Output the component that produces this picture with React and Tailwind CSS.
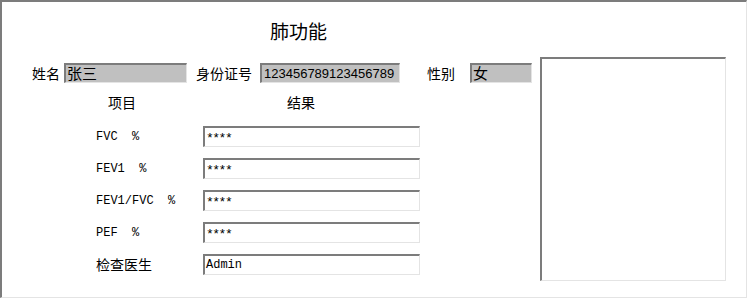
export default function App() {
    const cjk = { fontFamily: '"Noto Sans CJK SC", "Noto Sans", sans-serif' };
    const mono = { fontFamily: '"Liberation Mono", "Noto Sans CJK SC", monospace' };

    const rows = [
        { label: 'FVC  %', value: '****', mono: true },
        { label: 'FEV1  %', value: '****', mono: true },
        { label: 'FEV1/FVC  %', value: '****', mono: true },
        { label: 'PEF  %', value: '****', mono: true },
        { label: '检查医生', value: 'Admin', mono: false },
    ];

    const inset = 'border-t-2 border-l-2 border-b border-r border-t-[#7c7c7c] border-l-[#7c7c7c] border-b-[#e4e4e4] border-r-[#e4e4e4]';

    return (
        <div className="h-[300px] w-[750px] bg-white" style={cjk}>
            <div className={`flex h-[298px] w-[747px] ${inset}`}>
                <div className="flex w-[538px] flex-col">
                    <h1 className="ml-[268px] mt-[15px] h-[28px] text-[19px] leading-[28px] text-black">肺功能</h1>

                    <div className="mt-[18px] flex h-[20px] items-center pl-[30px] text-[14px] text-black">
                        <span className="leading-none">姓名</span>
                        <div className={`ml-[4px] flex h-[20px] w-[123px] items-center bg-[#c0c0c0] pl-[1px] text-[15px] ${inset}`}>张三</div>
                        <span className="ml-[9px] leading-none">身份证号</span>
                        <div
                            className={`ml-[8px] flex h-[20px] w-[140px] items-center bg-[#c0c0c0] pl-[2px] text-[13px] ${inset}`}
                            style={{ fontFamily: '"Liberation Sans", Arial, sans-serif' }}
                        >
                            123456789123456789
                        </div>
                        <span className="ml-[27px] leading-none">性别</span>
                        <div className={`ml-[15px] flex h-[20px] w-[62px] items-center bg-[#c0c0c0] pl-[1px] text-[15px] ${inset}`}>女</div>
                    </div>

                    <div className="mt-[9px] flex h-[20px] items-center text-[14px] text-black">
                        <span className="ml-[106px] leading-none">项目</span>
                        <span className="ml-[151px] leading-none">结果</span>
                    </div>

                    <div className="mt-[14px] flex flex-col gap-[11px]">
                        {rows.map((r) => (
                            <div key={r.label} className="flex h-[21px] items-center">
                                <span
                                    className={`ml-[94px] w-[107px] whitespace-pre text-black ${r.mono ? 'text-[12px]' : 'text-[14px]'}`}
                                    style={r.mono ? mono : cjk}
                                >
                                    {r.label}
                                </span>
                                <div
                                    className={`flex h-[21px] w-[217px] items-center bg-white pl-[1px] text-[12px] text-black ${inset}`}
                                    style={mono}
                                >
                                    {r.value === '****' ? (
                                        <span className="translate-y-[2px] text-[13px] tracking-[-1.5px]">****</span>
                                    ) : (
                                        r.value
                                    )}
                                </div>
                            </div>
                        ))}
                    </div>
                </div>

                <div className="flex flex-col">
                    <div className={`mt-[55px] h-[224px] w-[186px] bg-white ${inset}`} />
                </div>
            </div>
        </div>
    );
}
